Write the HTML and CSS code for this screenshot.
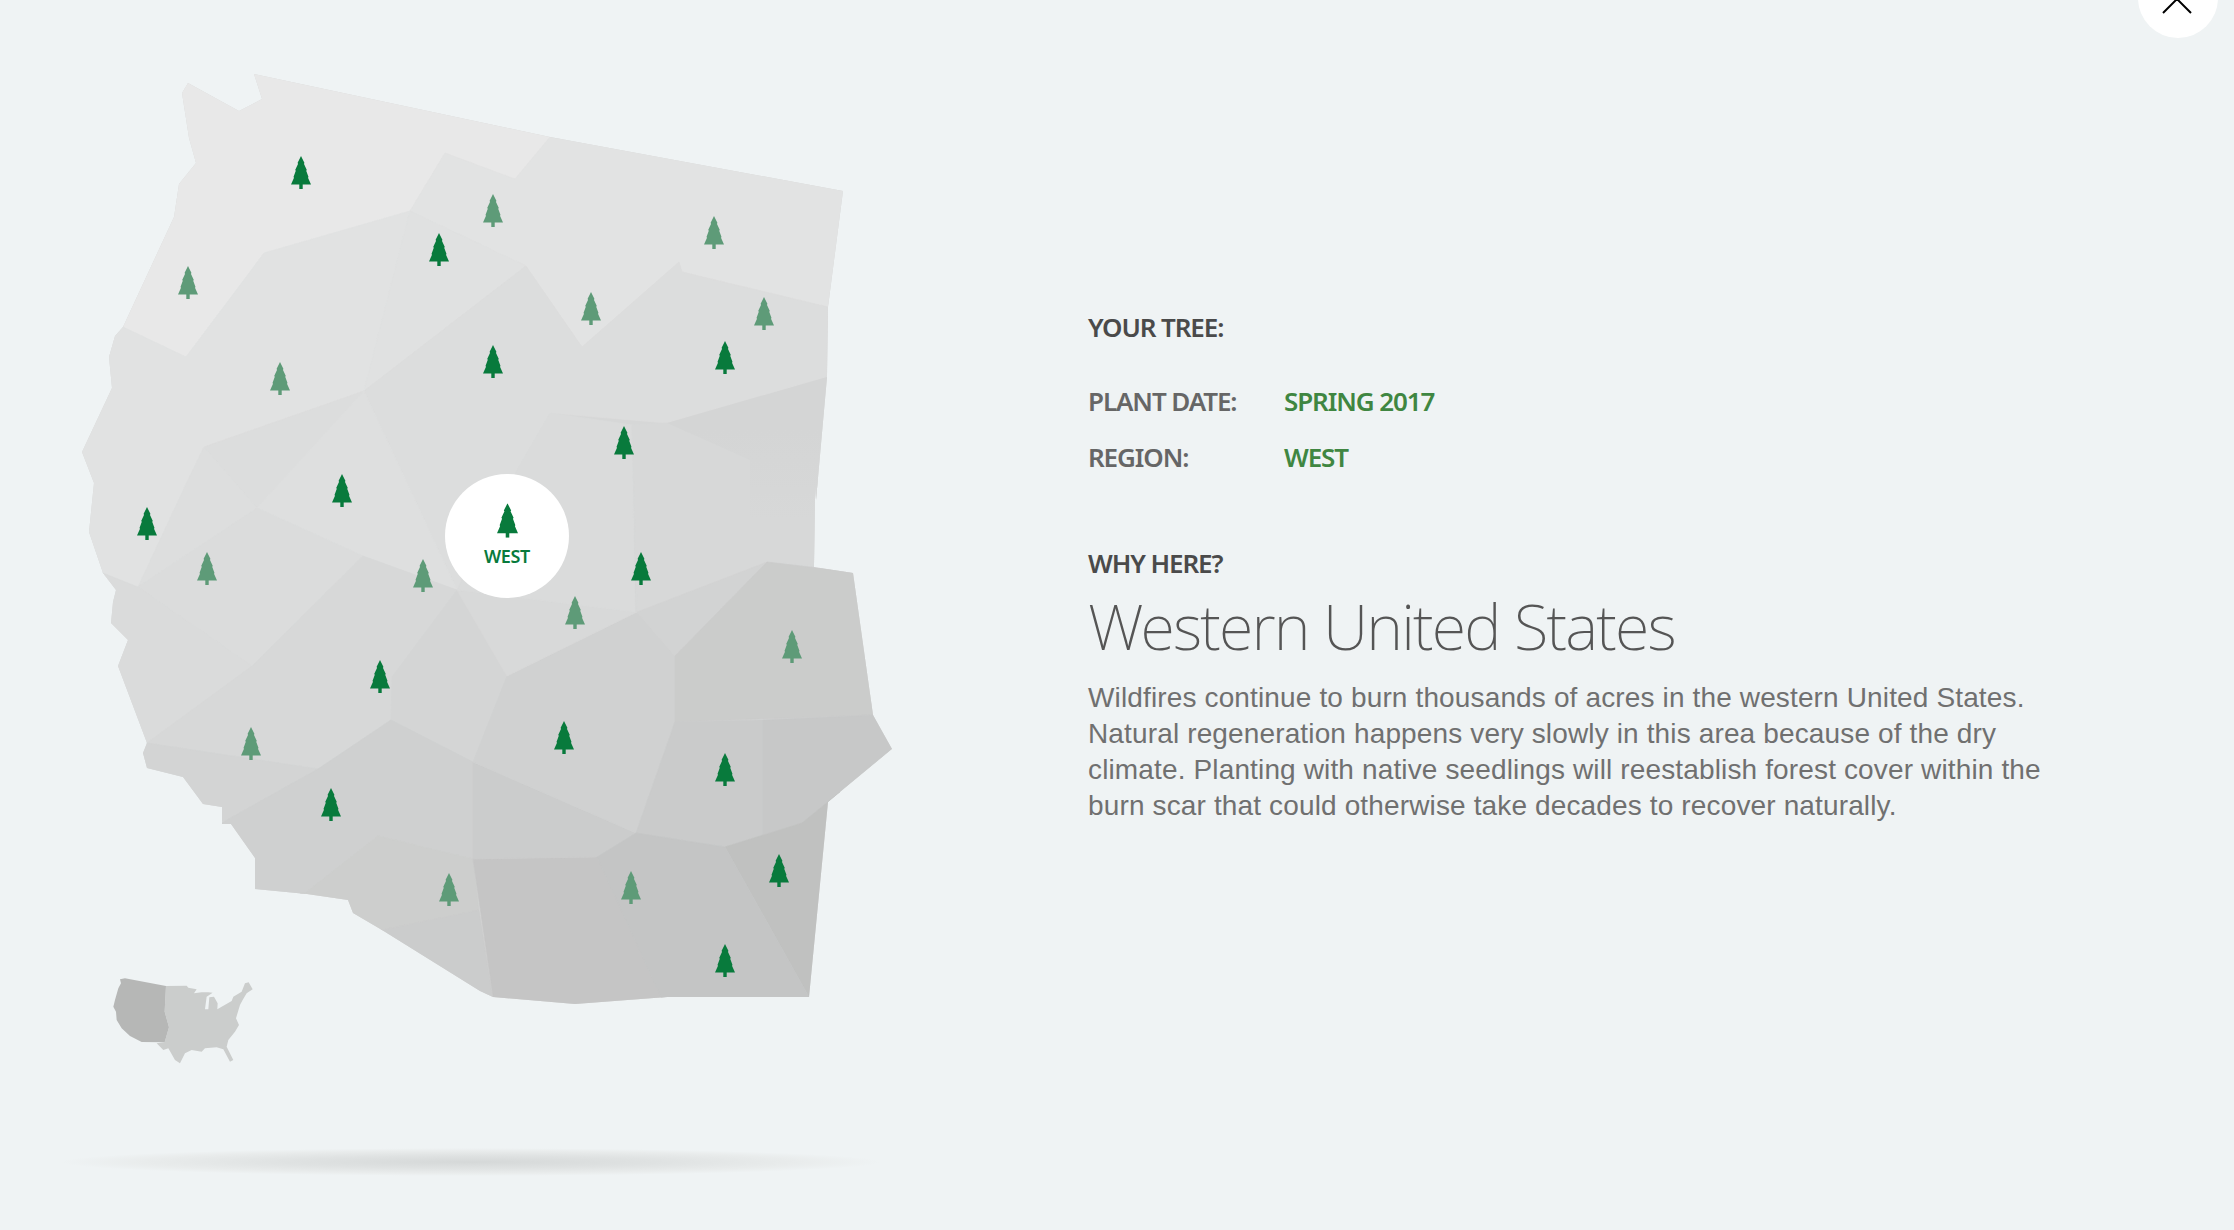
FILE: index.html
```html
<!DOCTYPE html>
<html lang="en">
<head>
<meta charset="utf-8">
<title>Your Tree</title>
<link rel="stylesheet" href="styles.css">
</head>
<body>
<main class="page">
  <section class="map-col">
    <svg class="map" width="900" height="1230" viewBox="0 0 900 1230" xmlns="http://www.w3.org/2000/svg">
      <defs>
        <clipPath id="outline"><polygon points="254,74 550,137 843,191 828,307 827,377 816,500 815,484 814,567 853,573 873,715 892,749 828,802 809,997 667,997 575,1004 493,997 480,991 382,930 353,913 348,900 307,894 255,889 255,858 231,824 222,824 222,807 203,804 183,777 147,768 143,753 147,743 118,666 128,640 111,623 113,602 116,590 103,573 89,532 94,483 82,452 112,388 109,357 115,336 123,327 174,217 179,184 196,163 189,138 182,93 188,83 239,111 262,99"/></clipPath>
        <radialGradient id="shadow"><stop offset="0" stop-color="#d5d8d8"/><stop offset=".45" stop-color="#dfe2e2"/><stop offset=".8" stop-color="#e9ecec"/><stop offset="1" stop-color="#eff3f4"/></radialGradient>
        <linearGradient id="fade" gradientUnits="userSpaceOnUse" x1="0" y1="430" x2="0" y2="520"><stop offset="0" stop-color="#d4d5d5"/><stop offset="1" stop-color="#d7d8d8"/></linearGradient>
        <symbol id="tree" viewBox="0 0 20 33"><polygon points="10,0 13.5,7 12.9,7.8 15.8,14 15.2,14.8 17.5,21 17,21.8 20,28.6 11.7,28.6 11.7,33 8.3,33 8.3,28.6 0,28.6 3,21.8 2.5,21 4.8,14.8 4.2,14 7.1,7.8 6.5,7"/></symbol>
      </defs>
      <g clip-path="url(#outline)" stroke-width=".7">
        <rect x="60" y="60" width="850" height="960" fill="#d6d7d7"/>
        <polygon fill="#e8e8e8" stroke="#e8e8e8" points="60,60 560,60 550,137 515,179 445,153 410,211 264,253 186,357 123,327 60,300"/>
        <polygon fill="#e2e3e3" stroke="#e2e3e3" points="445,153 515,179 550,137 860,170 828,307 682,272 679,262 582,347 526,266 410,211"/>
        <polygon fill="#e1e2e2" stroke="#e1e2e2" points="186,357 264,253 410,211 364,391 204,447 188,480 138,587 60,573 60,327 123,327"/>
        <polygon fill="#e0e1e1" stroke="#e0e1e1" points="410,211 526,266 364,391"/>
        <polygon fill="#dcdddd" stroke="#dcdddd" points="364,391 526,266 582,347 679,262 682,272 828,307 827,377 667,423 550,413 517,470 470,560 457,590"/>
        <polygon fill="#dcdddd" stroke="#dcdddd" points="204,447 364,391 257,508"/>
        <polygon fill="#dedfdf" stroke="#dedfdf" points="364,391 457,590 363,556 257,508"/>
        <polygon fill="#dddede" stroke="#dddede" points="204,447 257,508 138,587 188,480"/>
        <polygon fill="#dbdcdc" stroke="#dbdcdc" points="138,587 257,508 363,556 252,666"/>
        <polygon fill="#dadbdb" stroke="#dadbdb" points="60,560 103,573 138,587 252,666 147,743 60,750"/>
        <polygon fill="#d7d8d8" stroke="#d7d8d8" points="363,556 457,590 392,677 391,720 318,769 147,743 252,666"/>
        <polygon fill="#d3d4d4" stroke="#d3d4d4" points="100,740 147,743 318,769 227,820 190,830 100,790"/>
        <polygon fill="#d4d5d5" stroke="#d4d5d5" points="457,590 507,676 473,762 391,720 392,677"/>
        <polygon fill="#cfd0d0" stroke="#cfd0d0" points="391,720 473,762 473,859 378,836 305,893 240,900 210,830 227,820 318,769"/>
        <polygon fill="#cdcecd" stroke="#cdcecd" points="378,836 473,859 479,910 382,930 353,930 300,893 305,893"/>
        <polygon fill="#cbcccc" stroke="#cbcccc" points="479,910 493,1000 360,930 382,930"/>
        <polygon fill="#c5c5c5" stroke="#c5c5c5" points="473,859 597,857 667,997 667,1010 495,1010"/>
        <polygon fill="#cbcccc" stroke="#cbcccc" points="473,762 636,833 597,857 473,859"/>
        <polygon fill="#d0d1d1" stroke="#d0d1d1" points="507,676 637,612 675,656 675,722 636,833 473,762"/>
        <polygon fill="#d8d9d9" stroke="#d8d9d9" points="457,590 637,612 507,676"/>
        <polygon fill="#dadbdb" stroke="#dadbdb" points="550,413 632,425 635,612 457,590 517,470"/>
        <polygon fill="#d7d8d8" stroke="#d7d8d8" points="632,425 667,423 750,460 830,480 830,567 767,562 637,612"/>
        <polygon fill="url(#fade)" points="667,423 827,377 840,560 750,560 750,460"/>
        <polygon fill="#d2d3d3" stroke="#d2d3d3" points="637,612 767,562 675,656"/>
        <polygon fill="#cbcccb" stroke="#cbcccb" points="767,562 860,573 873,715 675,722 675,656"/>
        <polygon fill="#cacbcb" stroke="#cacbcb" points="675,722 763,720 763,835 725,847 636,833"/>
        <polygon fill="#c7c8c8" stroke="#c7c8c8" points="763,720 873,715 905,738 802,823 763,835"/>
        <polygon fill="#c0c1c0" stroke="#c0c1c0" points="725,847 802,823 840,792 820,1010 809,997"/>
        <polygon fill="#c4c5c5" stroke="#c4c5c5" points="636,833 725,847 809,997 809,1010 667,1010 597,857"/>
      </g>
      <g class="tree-light">
        <use href="#tree" x="178" y="266" width="20" height="33"/>
        <use href="#tree" x="483" y="194" width="20" height="33"/>
        <use href="#tree" x="270" y="362" width="20" height="33"/>
        <use href="#tree" x="704" y="216" width="20" height="33"/>
        <use href="#tree" x="581" y="292" width="20" height="33"/>
        <use href="#tree" x="754" y="297" width="20" height="33"/>
        <use href="#tree" x="197" y="552" width="20" height="33"/>
        <use href="#tree" x="413" y="559" width="20" height="33"/>
        <use href="#tree" x="241" y="727" width="20" height="33"/>
        <use href="#tree" x="439" y="873" width="20" height="33"/>
        <use href="#tree" x="565" y="596" width="20" height="33"/>
        <use href="#tree" x="782" y="630" width="20" height="33"/>
        <use href="#tree" x="621" y="871" width="20" height="33"/>
      </g>
      <g class="tree-dark">
        <use href="#tree" x="291" y="156" width="20" height="33"/>
        <use href="#tree" x="429" y="233" width="20" height="33"/>
        <use href="#tree" x="483" y="345" width="20" height="33"/>
        <use href="#tree" x="332" y="474" width="20" height="33"/>
        <use href="#tree" x="715" y="341" width="20" height="33"/>
        <use href="#tree" x="614" y="426" width="20" height="33"/>
        <use href="#tree" x="137" y="507" width="20" height="33"/>
        <use href="#tree" x="370" y="660" width="20" height="33"/>
        <use href="#tree" x="321" y="788" width="20" height="33"/>
        <use href="#tree" x="631" y="552" width="20" height="33"/>
        <use href="#tree" x="554" y="721" width="20" height="33"/>
        <use href="#tree" x="715" y="753" width="20" height="33"/>
        <use href="#tree" x="769" y="854" width="20" height="33"/>
        <use href="#tree" x="715" y="944" width="20" height="33"/>
      </g>
      <g transform="translate(60 950) scale(.3333)">
        <polygon fill="#cbcdcc" points="318,108 380,107 385,113 410,118 402,130 425,127 445,127 458,128 440,140 435,178 445,178 448,142 462,140 473,160 472,178 515,153 520,140 545,125 555,100 566,97 578,118 560,130 548,150 540,165 528,205 537,225 525,245 505,270 500,290 520,330 510,335 490,298 470,292 435,295 425,305 395,300 375,310 360,340 345,330 325,295 310,300 290,280 314,277 327,232 314,185"/>
        <polygon fill="#b6b7b6" points="180,88 195,85 318,108 314,185 327,232 314,277 245,276 210,258 185,235 170,210 168,185 160,170 165,150 175,115 183,100"/>
      </g>
      <ellipse cx="471" cy="1162" rx="410" ry="14" fill="url(#shadow)"/>
    </svg>
    <div class="marker">
      <svg class="marker-tree" width="21" height="35" viewBox="0 0 20 33" xmlns="http://www.w3.org/2000/svg"><use href="#tree" width="20" height="33"/></svg>
      <span class="marker-label">WEST</span>
    </div>
  </section>
  <section class="info">
    <h2 class="label-head">YOUR TREE:</h2>
    <dl class="facts">
      <div class="fact"><dt>PLANT DATE:</dt><dd>SPRING 2017</dd></div>
      <div class="fact"><dt>REGION:</dt><dd>WEST</dd></div>
    </dl>
    <h2 class="label-head">WHY HERE?</h2>
    <h1 class="title">Western United States</h1>
    <p class="copy">Wildfires continue to burn thousands of acres in the western United States. Natural regeneration happens very slowly in this area because of the dry climate. Planting with native seedlings will reestablish forest cover within the burn scar that could otherwise take decades to recover naturally.</p>
  </section>
</main>
<button class="close" type="button" aria-label="Close">
  <svg width="40" height="40" viewBox="0 0 40 40" xmlns="http://www.w3.org/2000/svg"><path d="M5 7 L33 35 M33 7 L5 35" fill="none" stroke="#000" stroke-width="2"/></svg>
</button>
</body>
</html>
```

FILE: styles.css
```css
* { box-sizing: border-box; }
html, body { margin: 0; height: 100%; }
body {
  background: #eff3f4;
  overflow: hidden;
  position: relative;
  font-family: "Noto Sans", sans-serif;
}
.page { display: flex; height: 1230px; }
.map-col { position: relative; width: 1088px; flex: none; }
.map { display: block; }
.tree-dark { fill: #087a3c; }
.tree-light { fill: #5e9b78; }
.marker {
  position: absolute;
  left: 445px;
  top: 474px;
  width: 124px;
  height: 124px;
  border-radius: 50%;
  background: #fff;
  display: flex;
  flex-direction: column;
  align-items: center;
  padding-top: 29px;
}
.marker-tree { fill: #087a3c; display: block; }
.marker-label {
  margin-top: 6px;
  font-size: 18px;
  line-height: 24px;
  font-weight: 600;
  letter-spacing: -0.3px;
  color: #087a3c;
}
.info { width: 960px; padding-top: 309px; }
.label-head {
  margin: 0;
  font-size: 26px;
  line-height: 36px;
  font-weight: 600;
  letter-spacing: -1.1px;
  color: #4a4a4a;
}
.facts { margin: 38px 0 0; }
.fact { display: flex; height: 56px; font-size: 26px; line-height: 36px; font-weight: 600; letter-spacing: -1.1px; }
.fact dt { width: 196px; color: #666; }
.fact dd { margin: 0; color: #3f8641; }
.facts + .label-head { margin-top: 50px; }
.title {
  margin: 5px 0 0;
  font-family: "Noto Sans", sans-serif;
  font-size: 63px;
  line-height: 80px;
  font-weight: 200;
  letter-spacing: -1.85px;
  color: #555;
}
.copy {
  margin: 14px 0 0;
  font-family: "Liberation Sans", Arial, sans-serif;
  font-size: 28px;
  line-height: 36px;
  letter-spacing: 0.14px;
  color: #707070;
}
.close {
  position: absolute;
  right: 16px;
  top: -42px;
  width: 80px;
  height: 80px;
  border: 0;
  padding: 0;
  border-radius: 50%;
  background: #fff;
  display: flex;
  align-items: center;
  justify-content: center;
}
```
